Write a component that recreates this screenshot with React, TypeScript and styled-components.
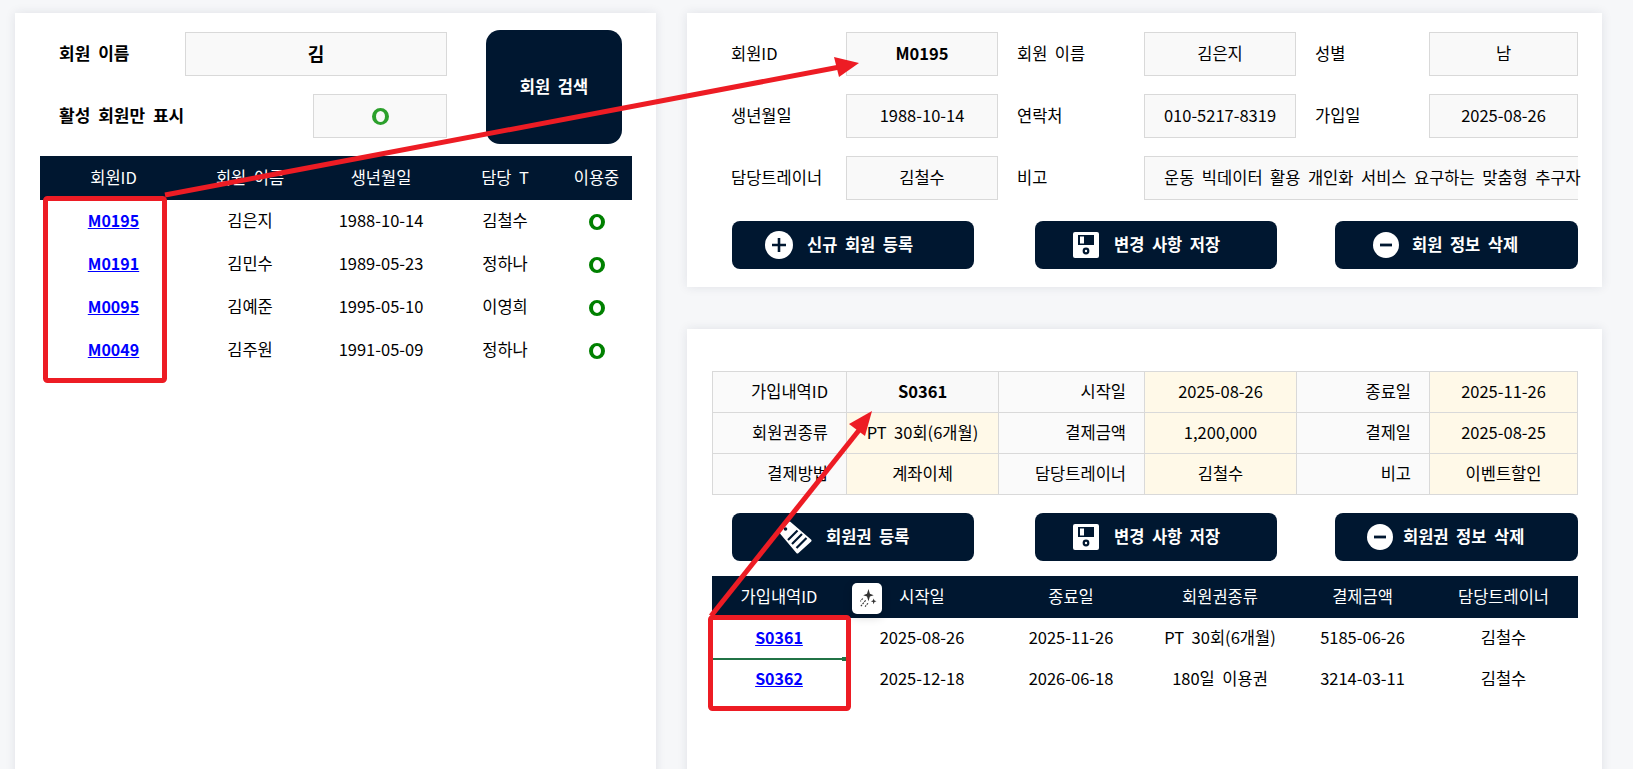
import React from 'react';
import styled, { createGlobalStyle } from 'styled-components';

const NAVY = '#001730';
const CELL_BORDER = '#d9d9d9';
const BOX_FILL = '#f9f9f9';
const INPUT_FILL = '#fff9e8';
const RED = '#ed1c24';

const GlobalStyle = createGlobalStyle`
  html, body {
    margin: 0;
    height: 100%;
    overflow: hidden;
    background: #f6f7f9;
    color: #000;
    font-family: "Noto Sans CJK KR", "Noto Sans", sans-serif;
    font-size: 16.5px;
    word-spacing: 3.8px;
  }
  * { box-sizing: border-box; }
`;

const Page = styled.div`
  position: relative;
  display: grid;
  grid-template-columns: 641px 915px;
  column-gap: 31px;
  width: 1633px;
  height: 769px;
  padding: 13px 0 0 15px;
  overflow: hidden;
`;

const Card = styled.section<{ $fill?: boolean; $pad: string }>`
  background: #fff;
  box-shadow: 0 0 10px rgba(30, 40, 70, 0.1);
  padding: ${(p) => p.$pad};
  ${(p) => (p.$fill ? 'height: 900px;' : '')}
`;

const RightColumn = styled.div`
  display: flex;
  flex-direction: column;
  gap: 42px;
`;

/* search panel */
const SearchArea = styled.div`
  display: flex;
  gap: 39px;
  padding-left: 44px;
`;

const FilterColumn = styled.div`
  width: 388px;
  padding-top: 2px;
  display: flex;
  flex-direction: column;
  gap: 18px;
`;

const FilterRow = styled.div`
  display: flex;
  align-items: center;
  justify-content: space-between;
`;

const FilterLabel = styled.span`
  font-weight: 700;
  font-size: 17px;
  word-spacing: 4px;
  padding-bottom: 3px;
`;

const ValueBox = styled.div<{ $width?: number; $bold?: boolean; $large?: boolean }>`
  ${(p) => (p.$width ? `width: ${p.$width}px;` : '')}
  height: 44px;
  display: flex;
  align-items: center;
  justify-content: center;
  padding-bottom: 3px;
  background: ${BOX_FILL};
  border: 1.5px solid ${CELL_BORDER};
  font-size: ${(p) => (p.$large ? 18 : 16.5)}px;
  font-weight: ${(p) => (p.$bold ? 700 : 400)};
  white-space: nowrap;
`;

const MemoBox = styled(ValueBox)`
  grid-column: span 3;
  justify-content: flex-start;
  padding-left: 19px;
  border-right: none;
`;

const SearchButton = styled.button`
  width: 136px;
  height: 114px;
  padding: 0 0 3px;
  border: none;
  border-radius: 14px;
  background: ${NAVY};
  color: #fff;
  font: inherit;
  font-weight: 700;
  word-spacing: 4px;
`;

const Ring = styled.span<{ $color: string; $size: number }>`
  display: inline-block;
  width: ${(p) => p.$size}px;
  height: ${(p) => p.$size}px;
  margin-top: 3px;
  border-radius: 50%;
  border-style: solid;
  border-width: 3px 4px;
  border-color: ${(p) => p.$color};
`;

/* member list */
const MemberTable = styled.div`
  width: 592px;
  margin: 12px 0 0 25px;
`;

const GridRow = styled.div<{ $cols: string; $height: number; $head?: boolean }>`
  display: grid;
  grid-template-columns: ${(p) => p.$cols};
  height: ${(p) => p.$height}px;
  ${(p) => (p.$head ? `background: ${NAVY}; color: #fff;` : '')}
`;

const Cell = styled.div`
  position: relative;
  display: flex;
  align-items: center;
  justify-content: center;
  padding-bottom: 3px;
  white-space: nowrap;
`;

const IdLink = styled.a`
  color: #0000ff;
  font-size: 16px;
  font-weight: 700;
  text-decoration: underline;
`;

/* detail form */
const FieldGrid = styled.div`
  display: grid;
  grid-template-columns: 134px 152px 146px 152px 133px 149px;
  grid-auto-rows: 44px;
  row-gap: 18px;
  margin-left: 25px;
`;

const FieldLabel = styled.div`
  display: flex;
  align-items: center;
  padding: 0 0 3px 19px;
`;

const ButtonRow = styled.div<{ $top: number }>`
  display: grid;
  grid-template-columns: 303px 300px 243px;
  margin: ${(p) => p.$top}px 0 0 45px;
`;

const ActionButton = styled.button<{ $inset: number; $gap: number }>`
  width: 100%;
  height: 48px;
  display: flex;
  align-items: center;
  gap: ${(p) => p.$gap}px;
  padding: 0 0 0 ${(p) => p.$inset}px;
  border: none;
  border-radius: 8px;
  background: ${NAVY};
  color: #fff;
  font: inherit;
  font-weight: 700;
  word-spacing: 3.8px;
  white-space: nowrap;
`;

const ButtonText = styled.span`
  padding-bottom: 3px;
`;

const ButtonSlot = styled.div`
  width: 242px;
`;

/* membership detail */
const DetailTable = styled.div`
  display: grid;
  grid-template-columns: 134px 152px 146px 152px 133px 148px;
  grid-auto-rows: 41px;
  width: 866px;
  margin-left: 25px;
  border-top: 1px solid ${CELL_BORDER};
  border-left: 1px solid ${CELL_BORDER};
`;

const DetailLabel = styled.div`
  display: flex;
  align-items: center;
  justify-content: flex-end;
  padding: 0 18px 3px 0;
  background: #fafafa;
  border-right: 1px solid ${CELL_BORDER};
  border-bottom: 1px solid ${CELL_BORDER};
  white-space: nowrap;
`;

const DetailValue = styled.div<{ $input?: boolean; $bold?: boolean }>`
  display: flex;
  align-items: center;
  justify-content: center;
  padding-bottom: 3px;
  background: ${(p) => (p.$input ? INPUT_FILL : BOX_FILL)};
  font-weight: ${(p) => (p.$bold ? 700 : 400)};
  border-right: 1px solid ${CELL_BORDER};
  border-bottom: 1px solid ${CELL_BORDER};
  white-space: nowrap;
`;

const HistoryTable = styled.div`
  width: 866px;
  margin: 15px 0 0 25px;
`;

const SelectionEdge = styled.span`
  position: absolute;
  left: 0;
  right: 0;
  bottom: -1px;
  height: 2px;
  background: #217346;

  &::after {
    content: '';
    position: absolute;
    right: 0;
    top: -1px;
    width: 4px;
    height: 4px;
    background: #217346;
  }
`;

const QuickAction = styled.span`
  position: absolute;
  left: 140px;
  top: 7px;
  width: 30px;
  height: 31px;
  display: flex;
  align-items: center;
  justify-content: center;
  background: #fff;
  border-radius: 5px;
  box-shadow: 0 3px 10px rgba(0, 0, 0, 0.18);
`;

const Annotation = styled.svg`
  position: absolute;
  left: 0;
  top: 0;
  pointer-events: none;
`;

const PlusIcon = () => (
  <svg width="28" height="28" viewBox="0 0 28 28">
    <circle cx="14" cy="14" r="14" fill="#fff" />
    <path d="M14 7v14M7 14h14" stroke={NAVY} strokeWidth="2.6" />
  </svg>
);

const MinusIcon = () => (
  <svg width="26" height="26" viewBox="0 0 26 26">
    <circle cx="13" cy="13" r="13" fill="#fff" />
    <path d="M7 13h12" stroke={NAVY} strokeWidth="2.8" />
  </svg>
);

const SaveIcon = () => (
  <svg width="26" height="26" viewBox="0 0 26 26">
    <path d="M2 0h22a2 2 0 0 1 2 2v22a2 2 0 0 1-2 2H2a2 2 0 0 1-2-2V2a2 2 0 0 1 2-2z" fill="#fff" />
    <rect x="5" y="3" width="16" height="10" fill={NAVY} />
    <rect x="7" y="4.5" width="4" height="7" fill="#fff" />
    <circle cx="13" cy="19" r="3.4" fill={NAVY} />
    <circle cx="13" cy="19" r="1.2" fill="#fff" />
  </svg>
);

const TagIcon = () => (
  <svg width="32" height="33" viewBox="0 0 32 33">
    <path d="M1 10.5L8.5 1a1.5 1.5 0 0 1 1.8-.3L31 18.5a1.5 1.5 0 0 1 .2 2L18.5 32a1.5 1.5 0 0 1-2.1 0L.8 13.5a2 2 0 0 1 .2-3z" fill="#fff" />
    <circle cx="5.5" cy="8" r="1.8" fill={NAVY} />
    <path d="M8 19L17.5 9.5M12 23L22 13M16.5 27L26.5 17" stroke={NAVY} strokeWidth="2.2" />
  </svg>
);

const SparkIcon = () => (
  <svg width="19" height="21" viewBox="0 0 20 22">
    <path d="M11 1l1.5 5 4 1.5-4 1.5L11 14l-1.5-5-4-1.5 4-1.5z" fill="#333" />
    <path d="M16.5 11l.8 2.2 2.2.8-2.2.8-.8 2.2-.8-2.2-2.2-.8 2.2-.8z" fill="#333" />
    <path d="M5 11l-2.5 3M8 13l-5 6M10.5 16l-3 3.5" stroke="#333" strokeWidth="1.2" strokeDasharray="2 1" />
  </svg>
);

const members = [
  ['M0195', '김은지', '1988-10-14', '김철수'],
  ['M0191', '김민수', '1989-05-23', '정하나'],
  ['M0095', '김예준', '1995-05-10', '이영희'],
  ['M0049', '김주원', '1991-05-09', '정하나'],
];

const history = [
  ['S0361', '2025-08-26', '2025-11-26', 'PT 30회(6개월)', '5185-06-26', '김철수'],
  ['S0362', '2025-12-18', '2026-06-18', '180일 이용권', '3214-03-11', '김철수'],
];

const MEMBER_COLS = '147px 126px 136px 112px 71px';
const HISTORY_COLS = '134px 152px 146px 152px 133px 149px';

export default function App() {
  return (
    <Page>
      <GlobalStyle />
      <Card $fill $pad="17px 0 0 0">
        <SearchArea>
          <FilterColumn>
            <FilterRow>
              <FilterLabel>회원 이름</FilterLabel>
              <ValueBox $width={262} $bold $large>김</ValueBox>
            </FilterRow>
            <FilterRow>
              <FilterLabel>활성 회원만 표시</FilterLabel>
              <ValueBox $width={134}><Ring $color="#2ca02c" $size={17} /></ValueBox>
            </FilterRow>
          </FilterColumn>
          <SearchButton>회원 검색</SearchButton>
        </SearchArea>
        <MemberTable>
          <GridRow $cols={MEMBER_COLS} $height={44} $head>
            {['회원ID', '회원 이름', '생년월일', '담당 T', '이용중'].map((h) => (
              <Cell key={h}>{h}</Cell>
            ))}
          </GridRow>
          {members.map(([id, name, birth, trainer]) => (
            <GridRow key={id} $cols={MEMBER_COLS} $height={43}>
              <Cell><IdLink href="#">{id}</IdLink></Cell>
              <Cell>{name}</Cell>
              <Cell>{birth}</Cell>
              <Cell>{trainer}</Cell>
              <Cell><Ring $color="#008000" $size={16} /></Cell>
            </GridRow>
          ))}
        </MemberTable>
      </Card>

      <RightColumn>
        <Card $pad="19px 0 18px 0">
          <FieldGrid>
            <FieldLabel>회원ID</FieldLabel>
            <ValueBox $bold>M0195</ValueBox>
            <FieldLabel>회원 이름</FieldLabel>
            <ValueBox>김은지</ValueBox>
            <FieldLabel>성별</FieldLabel>
            <ValueBox>남</ValueBox>
            <FieldLabel>생년월일</FieldLabel>
            <ValueBox>1988-10-14</ValueBox>
            <FieldLabel>연락처</FieldLabel>
            <ValueBox>010-5217-8319</ValueBox>
            <FieldLabel>가입일</FieldLabel>
            <ValueBox>2025-08-26</ValueBox>
            <FieldLabel>담당트레이너</FieldLabel>
            <ValueBox>김철수</ValueBox>
            <FieldLabel>비고</FieldLabel>
            <MemoBox>운동 빅데이터 활용 개인화 서비스 요구하는 맞춤형 추구자</MemoBox>
          </FieldGrid>
          <ButtonRow $top={21}>
            <ButtonSlot><ActionButton $inset={33} $gap={14}><PlusIcon /><ButtonText>신규 회원 등록</ButtonText></ActionButton></ButtonSlot>
            <ButtonSlot><ActionButton $inset={38} $gap={15}><SaveIcon /><ButtonText>변경 사항 저장</ButtonText></ActionButton></ButtonSlot>
            <ActionButton $inset={38} $gap={13}><MinusIcon /><ButtonText>회원 정보 삭제</ButtonText></ActionButton>
          </ButtonRow>
        </Card>

        <Card $fill $pad="42px 0 0 0">
          <DetailTable>
            <DetailLabel>가입내역ID</DetailLabel>
            <DetailValue $bold>S0361</DetailValue>
            <DetailLabel>시작일</DetailLabel>
            <DetailValue $input>2025-08-26</DetailValue>
            <DetailLabel>종료일</DetailLabel>
            <DetailValue $input>2025-11-26</DetailValue>
            <DetailLabel>회원권종류</DetailLabel>
            <DetailValue $input>PT 30회(6개월)</DetailValue>
            <DetailLabel>결제금액</DetailLabel>
            <DetailValue $input>1,200,000</DetailValue>
            <DetailLabel>결제일</DetailLabel>
            <DetailValue $input>2025-08-25</DetailValue>
            <DetailLabel>결제방법</DetailLabel>
            <DetailValue $input>계좌이체</DetailValue>
            <DetailLabel>담당트레이너</DetailLabel>
            <DetailValue $input>김철수</DetailValue>
            <DetailLabel>비고</DetailLabel>
            <DetailValue $input>이벤트할인</DetailValue>
          </DetailTable>
          <ButtonRow $top={18}>
            <ButtonSlot><ActionButton $inset={48} $gap={14}><TagIcon /><ButtonText>회원권 등록</ButtonText></ActionButton></ButtonSlot>
            <ButtonSlot><ActionButton $inset={38} $gap={15}><SaveIcon /><ButtonText>변경 사항 저장</ButtonText></ActionButton></ButtonSlot>
            <ActionButton $inset={32} $gap={10}><MinusIcon /><ButtonText>회원권 정보 삭제</ButtonText></ActionButton>
          </ButtonRow>
          <HistoryTable>
            <GridRow $cols={HISTORY_COLS} $height={42} $head>
              <Cell>
                가입내역ID
                <QuickAction><SparkIcon /></QuickAction>
              </Cell>
              {['시작일', '종료일', '회원권종류', '결제금액', '담당트레이너'].map((h) => (
                <Cell key={h}>{h}</Cell>
              ))}
            </GridRow>
            {history.map(([id, start, end, kind, amount, trainer], i) => (
              <GridRow key={id} $cols={HISTORY_COLS} $height={41}>
                <Cell>
                  <IdLink href="#">{id}</IdLink>
                  {i === 0 && <SelectionEdge />}
                </Cell>
                <Cell>{start}</Cell>
                <Cell>{end}</Cell>
                <Cell>{kind}</Cell>
                <Cell>{amount}</Cell>
                <Cell>{trainer}</Cell>
              </GridRow>
            ))}
          </HistoryTable>
        </Card>
      </RightColumn>

      <Annotation width="1633" height="769" viewBox="0 0 1633 769" fill="none">
        <rect x="45.5" y="198.5" width="119" height="182" rx="2" stroke={RED} strokeWidth="5" />
        <path d="M165 195L845 66" stroke={RED} strokeWidth="5" />
        <path d="M859 63L834 57L839 77z" fill={RED} />
        <rect x="710.5" y="617.5" width="138" height="91" rx="2" stroke={RED} strokeWidth="5" />
        <path d="M711 616L864 424" stroke={RED} strokeWidth="5" />
        <path d="M872 411L849 424L865 436z" fill={RED} />
      </Annotation>
    </Page>
  );
}
